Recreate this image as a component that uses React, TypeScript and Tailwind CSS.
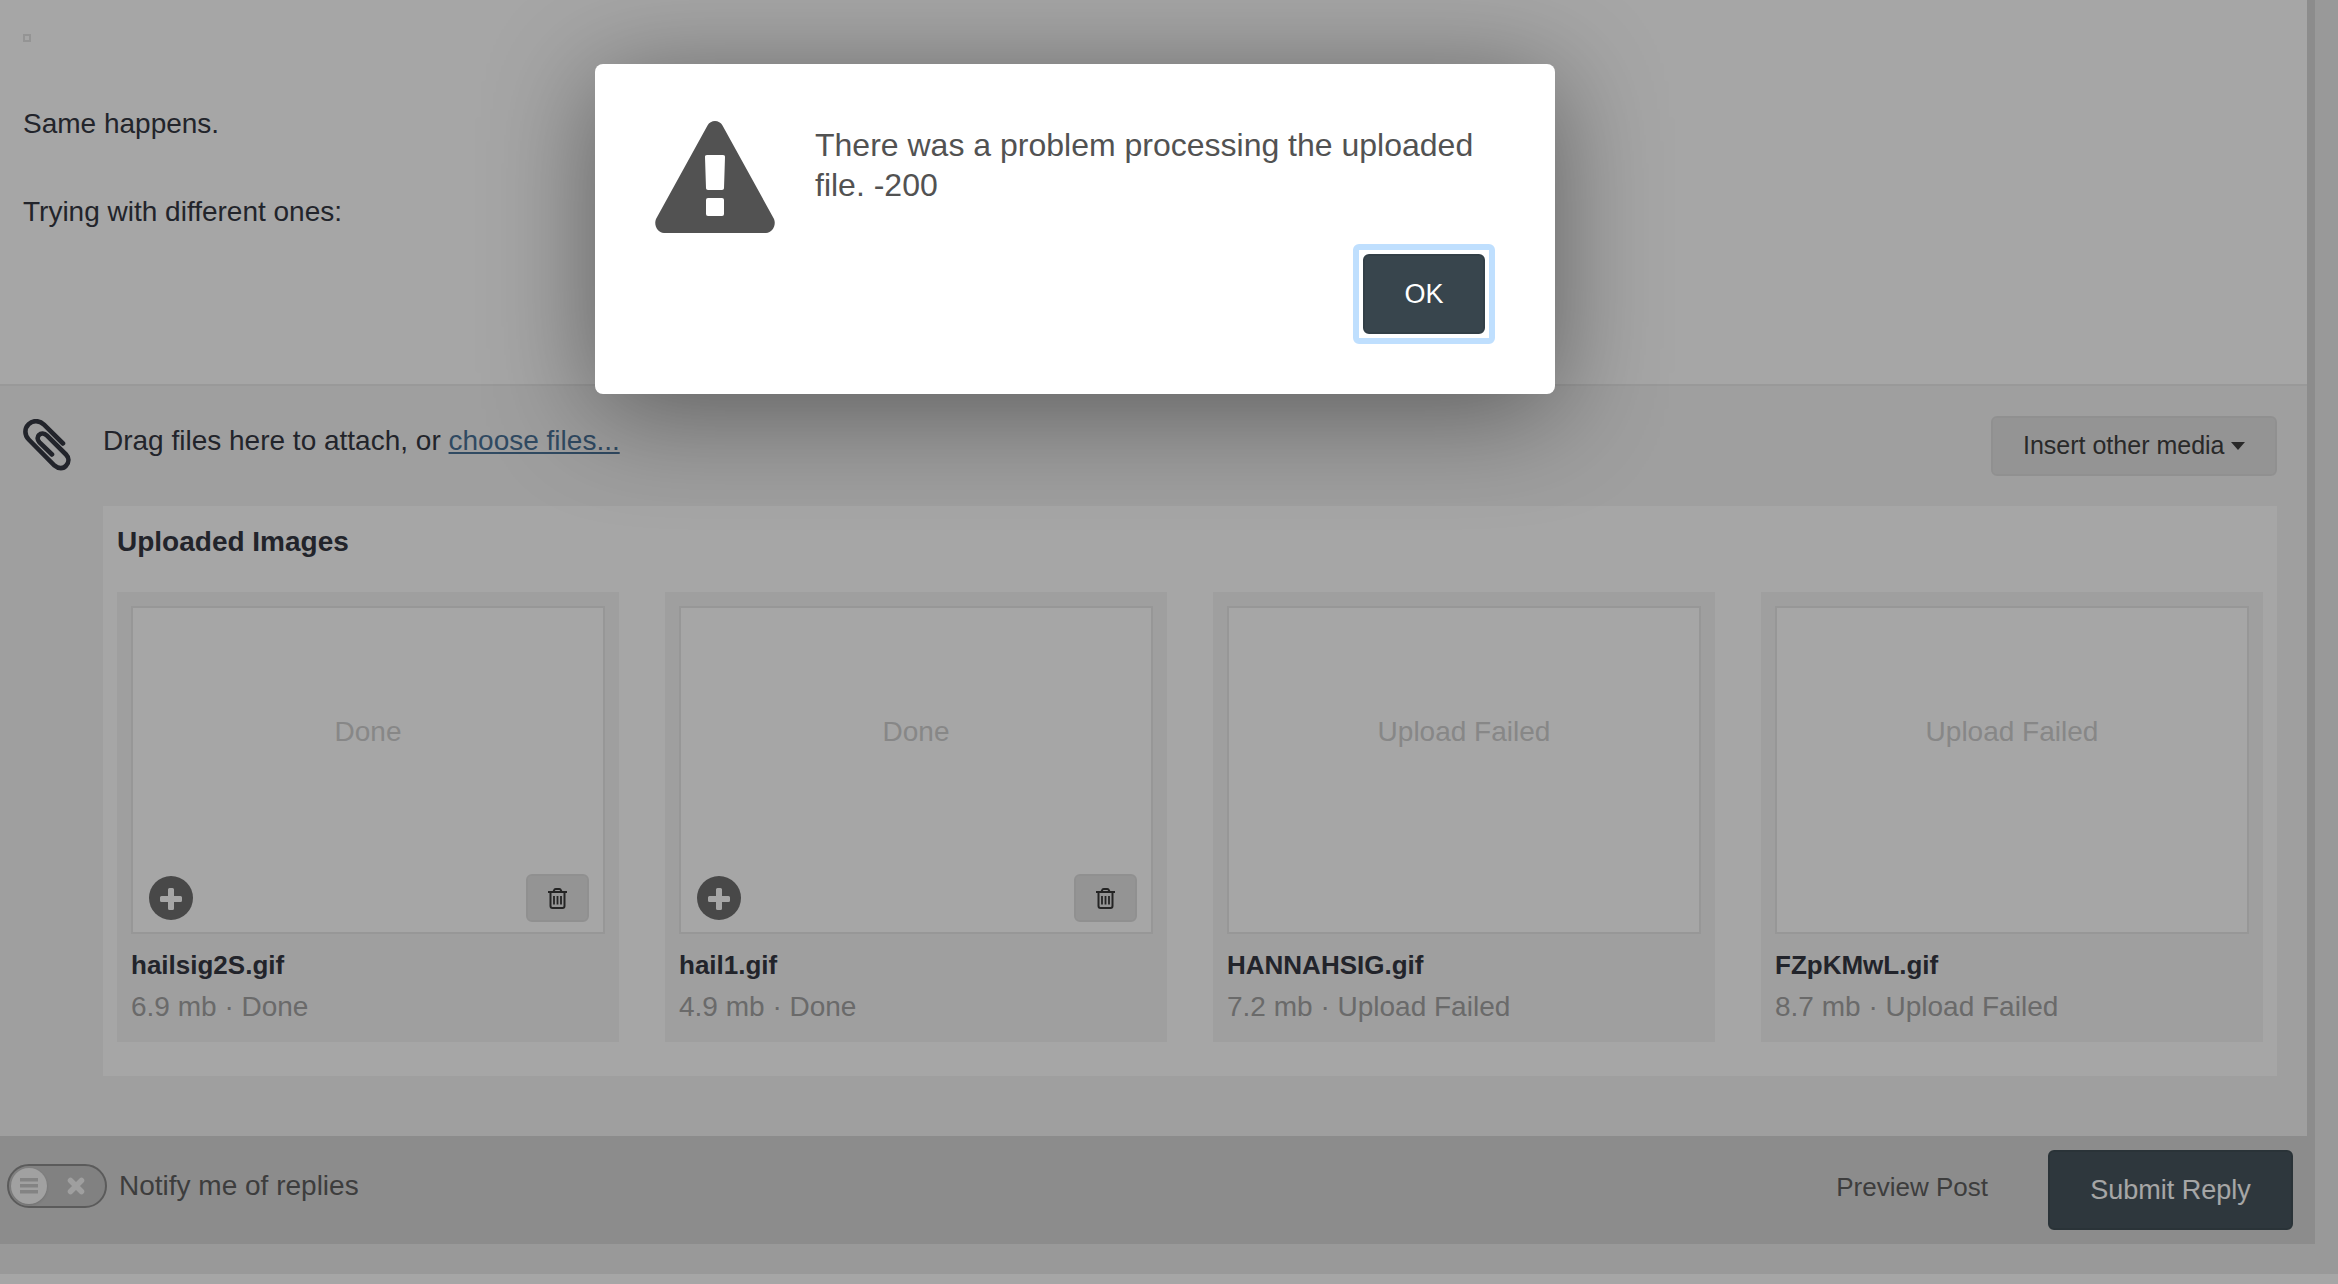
import type { ReactNode } from "react";

interface Upload {
  name: string;
  size: string;
  status: string;
}

const uploads: Upload[] = [
  { name: "hailsig2S.gif", size: "6.9 mb", status: "Done" },
  { name: "hail1.gif", size: "4.9 mb", status: "Done" },
  { name: "HANNAHSIG.gif", size: "7.2 mb", status: "Upload Failed" },
  { name: "FZpKMwL.gif", size: "8.7 mb", status: "Upload Failed" },
];

function PaperclipIcon() {
  return (
    <svg className="h-[52px] w-12 shrink-0" viewBox="0 0 48 52" fill="none" stroke="currentColor" strokeWidth="4.6" strokeLinecap="round">
      <path d="M40 24.500L21 5.700C16 .9 9.800 1.200 5.700 5.200C1.300 9.500 1.300 16 5.700 20.500L31.500 46.500C35.500 50 40.500 50 43.200 46.500C46.300 43 46 38.500 43 35.500L24 16.700C21.200 13.900 18 13.800 16 16C14 18 14.300 21 16.500 23.300L29 35.500" />
    </svg>
  );
}

function WarningIcon() {
  return (
    <svg className="h-28 w-[120px] shrink-0 text-[#525252]" viewBox="0 0 120 112" fill="currentColor">
      <path d="M60 0c3 0 6 1.500 7.500 4.500L119 98c2.500 6-1.500 14-8 14H9c-6.500 0-10.500-8-8-14L52.500 4.500C54 1.500 57 0 60 0z" />
      <path fill="#fff" d="M52 34h16c1.500 0 2.100.8 2 2.200l-1 30.800c0 1.300-.8 2-2 2H53c-1.200 0-2-.7-2-2l-1-30.800c-.1-1.400.5-2.200 2-2.200z" />
      <rect fill="#fff" x="51" y="77" width="18" height="18" rx="2" />
    </svg>
  );
}

function PlusIcon() {
  return (
    <svg className="size-11" viewBox="0 0 44 44">
      <circle cx="22" cy="22" r="22" fill="#6f6f6f" />
      <path fill="#fff" d="M20.500 12h3a1.500 1.500 0 0 1 1.500 1.500V20h6.500a1.500 1.500 0 0 1 1.500 1.500v3a1.500 1.500 0 0 1-1.500 1.500H25v6.500a1.500 1.500 0 0 1-1.500 1.500h-3a1.500 1.500 0 0 1-1.500-1.500V26h-6.500a1.500 1.500 0 0 1-1.500-1.500v-3a1.500 1.500 0 0 1 1.500-1.500H19v-6.500a1.500 1.500 0 0 1 1.500-1.500z" />
    </svg>
  );
}

function TrashIcon() {
  return (
    <svg className="h-[21px] w-[19px]" viewBox="0 0 19 21" fill="none" stroke="#383838" strokeWidth="2">
      <path d="M0 4h19M5.500 4l.5-1.600q.4-1.400 1.700-1.400h3.600q1.300 0 1.700 1.400l.5 1.600M2.500 4.500v13.500q0 2 2 2h10q2 0 2-2V4.500" />
      <path strokeWidth="1.800" d="M6 8v8.500M9.500 8v8.500M13 8v8.500" />
    </svg>
  );
}

function UploadCard({ name, size, status }: Upload) {
  return (
    <li className="bg-[#f5f5f5] p-3.5">
      <div className="flex h-[328px] flex-col justify-between border-2 border-[#e8e8e8] bg-white">
        <p className="pt-[104px] text-center text-[28px] leading-10 text-[#d0d0d0]">{status}</p>
        {status === "Done" && (
          <div className="flex items-center justify-between pr-3.5 pb-2.5 pl-4">
            <button type="button" aria-label={`Insert ${name}`}>
              <PlusIcon />
            </button>
            <button
              type="button"
              aria-label={`Delete ${name}`}
              className="flex h-12 w-[63px] items-center justify-center rounded-md border-2 border-[#dedede] bg-[#e4e4e4]"
            >
              <TrashIcon />
            </button>
          </div>
        )}
      </div>
      <p className="mt-2.5 text-[26px] leading-[42px] font-bold">{name}</p>
      <p className="text-[28px] leading-[42px] text-[#a3a3a3]">
        {size} · {status}
      </p>
    </li>
  );
}

function NotifyToggle() {
  return (
    <label className="flex items-center gap-3 text-[28px] text-[#5f5f5f]">
      <input type="checkbox" className="peer sr-only" />
      <span className="flex h-11 w-[100px] items-center rounded-full border-2 border-[#8c8c8c] bg-[#c6c6c6] px-0.5">
        <span className="flex size-9 items-center justify-center rounded-full bg-[#f7f7f7] shadow-sm">
          <svg className="h-4 w-[18px]" viewBox="0 0 18 16" fill="#c9c9c9">
            <path d="M0 0h18v3.500H0zM0 6h18v3.500H0zM0 12h18v3.500H0z" />
          </svg>
        </span>
        <svg className="ml-5 size-[18px]" viewBox="0 0 18 18" stroke="#f5f5f5" strokeWidth="5.500" strokeLinecap="round">
          <path d="M3.500 3.500l11 11M14.500 3.500l-11 11" />
        </svg>
      </span>
      Notify me of replies
    </label>
  );
}

function Overlay({ children }: { children: ReactNode }) {
  return <div className="absolute inset-0 flex items-start justify-center bg-black/35 pt-16 pr-[188px]">{children}</div>;
}

export default function App() {
  return (
    <div className="relative min-h-screen overflow-hidden bg-white font-['Liberation_Sans',Arial,sans-serif] text-[#353842]">
      <div className="bg-[#ebebeb] pr-[23px] pb-[30px]">
        <div className="bg-[#d7d7d7]">
          <main className="mr-2">
            <section className="h-96 bg-white px-[23px] pt-[34px] text-[28px] leading-11">
              <div className="size-2 border-2 border-[#e3e3e3]" />
              <p className="mt-[60px]">Same happens.</p>
              <p className="mt-11">Trying with different ones:</p>
            </section>

            <section className="flex border-t-2 border-[#ececec] bg-[#f5f5f5] pr-[30px] pb-[60px] pl-[23px]">
              <div className="w-20 shrink-0 pt-[33px]">
                <PaperclipIcon />
              </div>
              <div className="min-w-0 grow">
                <div className="flex h-[120px] items-center justify-between">
                  <p className="pb-2.5 text-[28px]">
                    Drag files here to attach, or{" "}
                    <a href="#files" className="text-[#4b7297] underline">
                      choose files...
                    </a>
                  </p>
                  <button
                    type="button"
                    className="flex h-[60px] w-[286px] items-center justify-between rounded-md border-2 border-[#dedede] bg-[#e4e4e4] px-[30px] text-[25px] font-medium text-[#404040]"
                  >
                    Insert other media
                    <svg className="h-2 w-3.5" viewBox="0 0 14 8" fill="currentColor">
                      <path d="M0 0h14L7 8z" />
                    </svg>
                  </button>
                </div>

                <div className="bg-white px-3.5 pb-[34px]">
                  <h2 className="flex h-[86px] items-start pt-4 text-[28px] leading-10 font-bold">Uploaded Images</h2>
                  <ul className="grid grid-cols-4 gap-[46px]">
                    {uploads.map((upload) => (
                      <UploadCard key={upload.name} {...upload} />
                    ))}
                  </ul>
                </div>
              </div>
            </section>
          </main>

          <footer className="flex h-[108px] items-center justify-between pr-[22px] pl-[7px]">
            <div className="pb-2">
              <NotifyToggle />
            </div>
            <div className="flex items-center gap-[60px]">
              <button type="button" className="pb-1.5 text-[26px] text-[#5f5f5f]">
                Preview Post
              </button>
              <button
                type="button"
                className="h-20 w-[245px] rounded-md border-2 border-[#414f56] bg-[#48555e] text-[27px] font-medium text-white"
              >
                Submit Reply
              </button>
            </div>
          </footer>
        </div>
      </div>

      <Overlay>
        <div
          role="alertdialog"
          aria-label="Upload problem"
          className="flex w-[960px] gap-10 rounded-lg bg-white px-[60px] pt-[57px] pb-[50px] text-[#525252] shadow-[0_16px_108px_rgba(0,0,0,0.43)]"
        >
          <WarningIcon />
          <div className="flex grow flex-col items-end">
            <p className="w-full pt-1 text-[32px] leading-10">There was a problem processing the uploaded file. -200</p>
            {/* focus ring */}
            <div className="mt-[39px] rounded-md border-6 border-[#bfdffe] p-1">
              <button
                type="button"
                className="block h-20 w-[122px] rounded-md border-2 border-[#323f47] bg-[#38454d] text-[27px] font-medium text-white outline-none"
              >
                OK
              </button>
            </div>
          </div>
        </div>
      </Overlay>
    </div>
  );
}
